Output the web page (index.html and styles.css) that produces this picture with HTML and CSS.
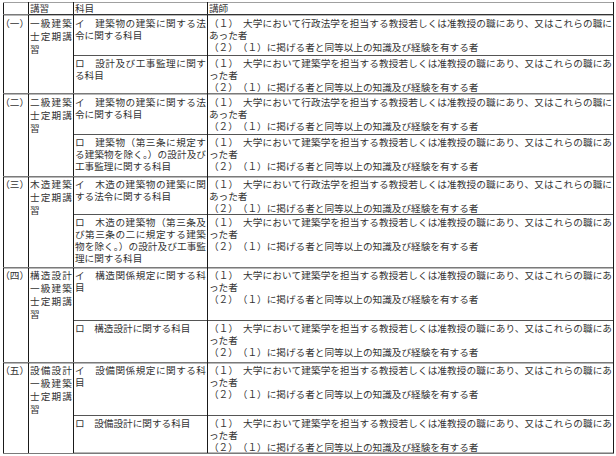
FILE: index.html
```html
<!DOCTYPE html>
<html lang="ja">
<head>
<meta charset="utf-8">
<link rel="stylesheet" href="styles.css">
</head>
<body>
<table class="tbl">
<colgroup>
<col class="c1"><col class="c2"><col class="c3"><col class="c4">
</colgroup>
<tr class="head">
<td class="no"></td><td>講習</td><td>科目</td><td>講師</td>
</tr>

<tr class="g r41 pad2">
<td class="no" rowspan="2">（一）</td>
<td class="name" rowspan="2">一級建築士定期講習</td>
<td>イ　建築物の建築に関する法令に関する科目</td>
<td class="lect"><p>（１）　大学において行政法学を担当する教授若しくは准教授の職にあり、又はこれらの職にあった者</p><p>（２）　（１）に掲げる者と同等以上の知識及び経験を有する者</p></td>
</tr>
<tr class="s r38">
<td>ロ　設計及び工事監理に関する科目</td>
<td class="lect"><p>（１）　大学において建築学を担当する教授若しくは准教授の職にあり、又はこれらの職にあった者</p><p>（２）　（１）に掲げる者と同等以上の知識及び経験を有する者</p></td>
</tr>

<tr class="g r41 pad2">
<td class="no" rowspan="2">（二）</td>
<td class="name" rowspan="2">二級建築士定期講習</td>
<td>イ　建築物の建築に関する法令に関する科目</td>
<td class="lect"><p>（１）　大学において行政法学を担当する教授若しくは准教授の職にあり、又はこれらの職にあった者</p><p>（２）　（１）に掲げる者と同等以上の知識及び経験を有する者</p></td>
</tr>
<tr class="s r42">
<td>ロ　建築物（第三条に規定する建築物を除く。）の設計及び工事監理に関する科目</td>
<td class="lect"><p>（１）　大学において建築学を担当する教授若しくは准教授の職にあり、又はこれらの職にあった者</p><p>（２）　（１）に掲げる者と同等以上の知識及び経験を有する者</p></td>
</tr>

<tr class="g r38">
<td class="no" rowspan="2">（三）</td>
<td class="name" rowspan="2">木造建築士定期講習</td>
<td>イ　木造の建築物の建築に関する法令に関する科目</td>
<td class="lect"><p>（１）　大学において行政法学を担当する教授若しくは准教授の職にあり、又はこれらの職にあった者</p><p>（２）　（１）に掲げる者と同等以上の知識及び経験を有する者</p></td>
</tr>
<tr class="s r53">
<td>ロ　木造の建築物（第三条及び第三条の二に規定する建築物を除く。）の設計及び工事監理に関する科目</td>
<td class="lect"><p>（１）　大学において建築学を担当する教授若しくは准教授の職にあり、又はこれらの職にあった者</p><p>（２）　（１）に掲げる者と同等以上の知識及び経験を有する者</p></td>
</tr>

<tr class="g r53">
<td class="no" rowspan="2">（四）</td>
<td class="name" rowspan="2">構造設計一級建築士定期講習</td>
<td>イ　構造関係規定に関する科目</td>
<td class="lect"><p>（１）　大学において建築学を担当する教授若しくは准教授の職にあり、又はこれらの職にあった者</p><p>（２）　（１）に掲げる者と同等以上の知識及び経験を有する者</p></td>
</tr>
<tr class="s r42">
<td>ロ　構造設計に関する科目</td>
<td class="lect"><p>（１）　大学において建築学を担当する教授若しくは准教授の職にあり、又はこれらの職にあった者</p><p>（２）　（１）に掲げる者と同等以上の知識及び経験を有する者</p></td>
</tr>

<tr class="g r53">
<td class="no" rowspan="2">（五）</td>
<td class="name" rowspan="2">設備設計一級建築士定期講習</td>
<td>イ　設備関係規定に関する科目</td>
<td class="lect"><p>（１）　大学において建築学を担当する教授若しくは准教授の職にあり、又はこれらの職にあった者</p><p>（２）　（１）に掲げる者と同等以上の知識及び経験を有する者</p></td>
</tr>
<tr class="s r38 last">
<td>ロ　設備設計に関する科目</td>
<td class="lect"><p>（１）　大学において建築学を担当する教授若しくは准教授の職にあり、又はこれらの職にあった者</p><p>（２）　（１）に掲げる者と同等以上の知識及び経験を有する者</p></td>
</tr>
</table>
</body>
</html>
```

FILE: styles.css
```css
html, body {
  margin: 0;
  background: #fff;
}
body {
  padding: 2px 3px 0 3px;
  font-family: "Noto Sans CJK JP", "Noto Sans", sans-serif;
  font-size: 9.65px;
  color: #333;
}
.tbl {
  border-collapse: collapse;
  table-layout: fixed;
  width: 610px;
}
.c1 { width: 25px; }
.c2 { width: 45px; }
.c3 { width: 134px; }
.c4 { width: 406px; }

.tbl td {
  vertical-align: top;
  text-align: justify;
  line-height: 12px;
  padding: 1px 1px 0 1px;
  border-left: 1px solid #1a1a1a;
  border-right: 1px solid #1a1a1a;
  word-break: break-all;
}
.tbl td p {
  margin: 0;
}
.head { height: 12px; }
.head td {
  border-top: 1px solid #a0a0a0;
  border-bottom: 1px solid #333;
  padding: 0 1px;
  line-height: 11px;
}
.tbl .no {
  font-feature-settings: "halt";
  text-align: left;
}
.tbl .name {
  line-height: 13px;
}
.pad2 td {
  padding-top: 2px;
}
.g td {
  border-top: 1px solid #7a7a7a;
  box-shadow: inset 0 1px 0 #b8b8b8;
}
.s td {
  border-top: 1px solid #555;
}
.last td {
  border-bottom: 1px solid #7a7a7a;
  box-shadow: inset 0 -1px 0 #b8b8b8;
}
.tbl .name, .tbl .no {
  border-bottom: 1px solid #7a7a7a;
}
.r38 { height: 38px; }
.r41 { height: 41px; }
.r42 { height: 42px; }
.r53 { height: 53px; }
```
